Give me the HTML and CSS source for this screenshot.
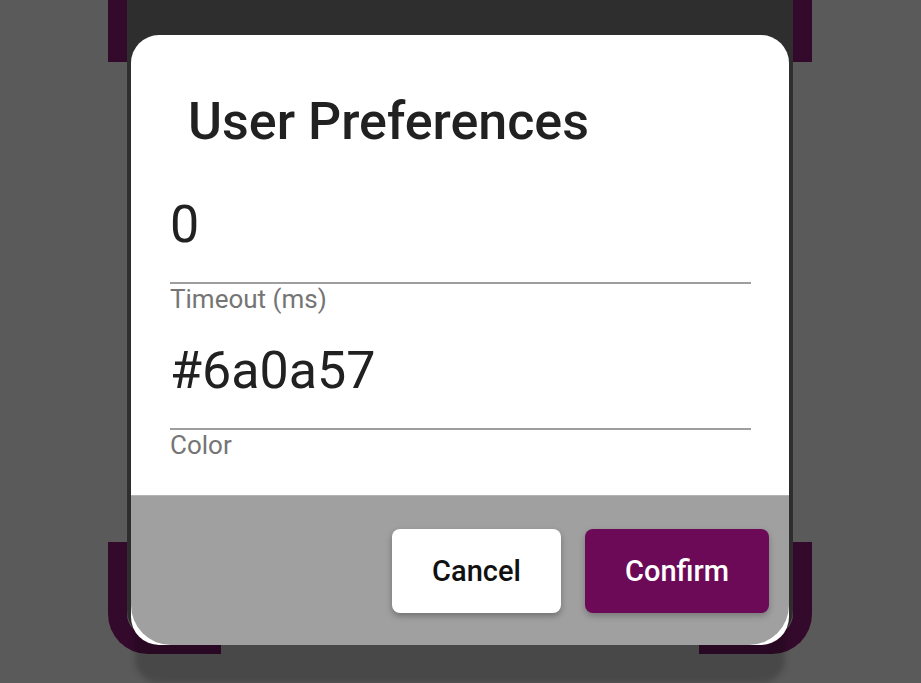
FILE: index.html
```html
<!DOCTYPE html>
<html lang="en">
<head>
<meta charset="utf-8">
<title>User Preferences</title>
<link rel="stylesheet" href="styles.css">
</head>
<body>
<div class="page">
  <div class="bracket bracket-tl"></div>
  <div class="bracket bracket-tr"></div>
  <div class="bracket bracket-bl"></div>
  <div class="bracket bracket-br"></div>
  <div class="card-behind"></div>

  <div class="dialog" role="dialog" aria-labelledby="dlg-title">
    <div class="dialog-header">
      <h1 class="dialog-title" id="dlg-title">User Preferences</h1>
    </div>
    <div class="dialog-fields">
      <div class="field">
        <div class="field-input">0</div>
        <div class="field-label">Timeout (ms)</div>
      </div>
      <div class="field">
        <div class="field-input">#6a0a57</div>
        <div class="field-label">Color</div>
      </div>
    </div>
    <div class="dialog-footer">
      <button class="btn btn-cancel">Cancel</button>
      <button class="btn btn-confirm">Confirm</button>
    </div>
  </div>
</div>
</body>
</html>
```

FILE: styles.css
```css
html, body {
  margin: 0;
  padding: 0;
}

body {
  width: 921px;
  height: 683px;
  overflow: hidden;
  background: #5a5a5a;
  font-family: Roboto, "Liberation Sans", Arial, sans-serif;
}

.page {
  position: relative;
  width: 921px;
  height: 683px;
  overflow: hidden;
}

/* backdrop page: purple corner brackets and dark card */
.bracket {
  position: absolute;
  box-sizing: border-box;
  border: 0 solid #330a2b;
}

.bracket-tl {
  left: 108px;
  top: -60px;
  width: 113px;
  height: 122px;
  border-left-width: 19px;
}

.bracket-tr {
  left: 699px;
  top: -60px;
  width: 113px;
  height: 122px;
  border-right-width: 19px;
}

.bracket-bl {
  left: 108px;
  top: 542px;
  width: 113px;
  height: 112px;
  border-left-width: 19px;
  border-bottom-width: 19px;
  border-bottom-left-radius: 40px;
}

.bracket-br {
  left: 699px;
  top: 542px;
  width: 113px;
  height: 112px;
  border-right-width: 19px;
  border-bottom-width: 19px;
  border-bottom-right-radius: 40px;
}

.card-behind {
  position: absolute;
  left: 127px;
  top: -20px;
  width: 666px;
  height: 660px;
  background: #2e2e2e;
  border-bottom-left-radius: 30px;
  border-bottom-right-radius: 30px;
}

/* dialog */
.dialog {
  position: absolute;
  left: 131px;
  top: 35px;
  width: 658px;
  height: 610px;
  box-sizing: border-box;
  background: #ffffff;
  border-radius: 28px;
  overflow: hidden;
  display: flex;
  flex-direction: column;
  box-shadow: 0 42px 6px -4px rgba(0, 0, 0, 0.2);
}

.dialog-header {
  padding: 56px 0 0 57px;
}

.dialog-title {
  margin: 0;
  font-size: 52px;
  font-weight: 500;
  line-height: normal;
  color: #212121;
  letter-spacing: 0;
}

.dialog-fields {
  margin-top: 42px;
  padding: 0 38px 0 39px;
  display: flex;
  flex-direction: column;
  gap: 26px;
}

.field-input {
  font-size: 52px;
  font-weight: 400;
  line-height: normal;
  color: #212121;
  padding-bottom: 27px;
  border-bottom: 2px solid #9e9e9e;
}

.field-label {
  font-size: 26px;
  line-height: normal;
  color: #757575;
}

.dialog-footer {
  margin-top: auto;
  height: 150px;
  box-sizing: border-box;
  padding: 33px 20px;
  background: #a0a0a0;
  border-top: 1px solid #b4b4b4;
  border-radius: 0 0 40px 40px;
  display: flex;
  justify-content: flex-end;
  gap: 24px;
}

.btn {
  height: 84px;
  padding: 0 39px;
  border: none;
  border-radius: 8px;
  font-family: Roboto, "Liberation Sans", Arial, sans-serif;
  font-size: 29px;
  font-weight: 500;
  cursor: pointer;
}

.btn-cancel {
  width: 169px;
  background: #ffffff;
  color: #111111;
  box-shadow: 0 3px 6px rgba(0, 0, 0, 0.3);
}

.btn-confirm {
  width: 184px;
  background: #6c0a57;
  color: #ffffff;
  box-shadow: 0 3px 6px rgba(0, 0, 0, 0.25);
}
```
